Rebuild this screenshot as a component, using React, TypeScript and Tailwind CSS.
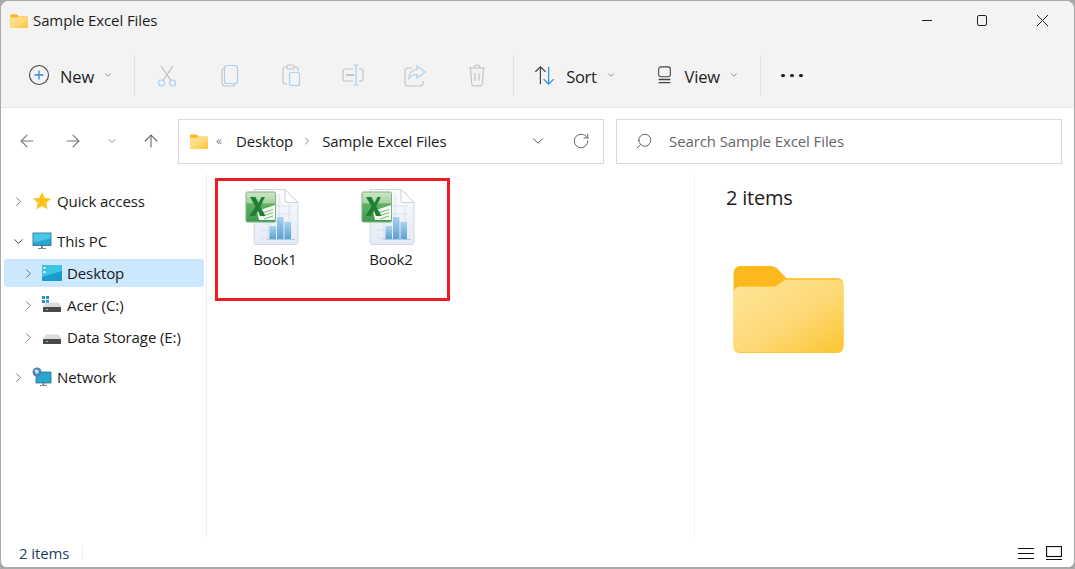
import { ChevronDown, ChevronRight, RotateCw, Search, ArrowLeft, ArrowRight, ArrowUp } from "lucide-react";

const FONT = "font-['Open_Sans','Noto_Sans',sans-serif]";

function FolderIcon({ className, id }: { className: string; id: string }) {
  return (
    <svg viewBox="0 0 110 88" className={className}>
      <defs>
        <linearGradient id={id} x1="0" y1="0" x2="1" y2="1">
          <stop offset="0" stopColor="#ffe59b" />
          <stop offset="0.55" stopColor="#fdd976" />
          <stop offset="1" stopColor="#fcc530" />
        </linearGradient>
      </defs>
      <path d="M0 8a7 7 0 0 1 7-7h28c5 0 8 1 11 5l7 7v14H0z" fill="#fdb81c" />
      <path d="M0 82V27a6 6 0 0 1 6-6h32c4 0 6-1 8-3l6-5h52a6 6 0 0 1 6 6v63a6 6 0 0 1-6 6H6a6 6 0 0 1-6-6z" fill="#fcc63d" />
      <path d="M0 81V28a6 6 0 0 1 6-6h32c4 0 6-1 8-3l6-4h52a6 6 0 0 1 6 6v60a6 6 0 0 1-6 6H6a6 6 0 0 1-6-6z" fill={`url(#${id})`} />
    </svg>
  );
}

function ExcelIcon({ id }: { id: string }) {
  return (
    <svg viewBox="0 0 54 58" className="mr-[6px] h-[58px] w-[54px]">
      <defs>
        <linearGradient id={id + "p"} x1="0" y1="0" x2="0" y2="1">
          <stop offset="0" stopColor="#f9fbfe" />
          <stop offset="1" stopColor="#e3ebf6" />
        </linearGradient>
        <linearGradient id={id + "g"} x1="0" y1="0" x2="0" y2="1">
          <stop offset="0" stopColor="#cfe6c9" />
          <stop offset="0.35" stopColor="#a8d3a2" />
          <stop offset="0.4" stopColor="#62b063" />
          <stop offset="1" stopColor="#3c9a4a" />
        </linearGradient>
        <linearGradient id={id + "b"} x1="0" y1="0" x2="0" y2="1">
          <stop offset="0" stopColor="#a6d4f0" />
          <stop offset="1" stopColor="#5f9fcf" />
        </linearGradient>
      </defs>
      <path d="M9 1.500h31l13 13v40a2 2 0 0 1-2 2H11a2 2 0 0 1-2-2z" fill={`url(#${id}p)`} stroke="#d2d7de" />
      <path d="M40 1.500v11a2 2 0 0 0 2 2h11z" fill="#fff" stroke="#cdd2d9" />
      <g stroke="#d8dde3" strokeWidth="0.8" fill="none">
        <path d="M15 18h32M15 26h32M15 34h32M15 42h32M15 50h18M23 34v18M34 6v46M44 16v26" />
      </g>
      <rect x="24.500" y="38" width="6.500" height="13" fill={`url(#${id}b)`} />
      <rect x="32" y="29" width="6.500" height="22" fill={`url(#${id}b)`} />
      <rect x="39.500" y="34" width="6.500" height="17" fill={`url(#${id}b)`} />
      <path d="M22 51.500h28" stroke="#a8cfea" />
      <rect x="1" y="4" width="29.500" height="30" rx="1.500" fill={`url(#${id}g)`} stroke="#7fb285" />
      <path d="M12 23l18-6v15H14z" fill="#f4f9f2" />
      <path d="M17 25l11-3.500M18 28l10-3.500M19 31l9-3" stroke="#7ab97d" strokeWidth="1" />
      <path d="M5 9h5.500l3 6 3-6H20l-4.800 9.500L20.500 28H15l-2-5-3 5H4.500l6-9.500z" fill="#217e35" />
    </svg>
  );
}

function ToolIcon({ children }: { children: React.ReactNode }) {
  return (
    <svg viewBox="0 0 24 24" className="h-6 w-6" fill="none" strokeWidth="1.2">
      {children}
    </svg>
  );
}

function Divider() {
  return <div className="h-[41px] w-px bg-[#e2e2e2]" />;
}

function Caret({ className }: { className: string }) {
  return <ChevronDown size={10} strokeWidth={1.5} className={`text-[#555] ${className}`} />;
}

function NavRow({
  indent,
  open,
  label,
  icon,
  selected,
  mt,
}: {
  indent?: boolean;
  open?: boolean;
  label: string;
  icon: React.ReactNode;
  selected?: boolean;
  mt?: string;
}) {
  return (
    <div
      className={`ml-[3px] flex h-[28px] w-[200px] items-center rounded-[3px] ${mt ?? "mt-1"} ${selected ? "bg-[#cce8ff]" : ""} ${indent ? "pl-[17px]" : "pl-[7px]"}`}
    >
      {open ? (
        <ChevronDown size={15} strokeWidth={1.4} className="text-[#222]" />
      ) : (
        <ChevronRight size={15} strokeWidth={1.4} className="text-[#666]" />
      )}
      <span className="ml-[6px] flex w-[20px] justify-center">{icon}</span>
      <span className="ml-[5px] text-[15px] tracking-[-0.1px] text-[#1a1a1a]">{label}</span>
    </div>
  );
}

function Drive({ windows }: { windows?: boolean }) {
  return (
    <svg viewBox="0 0 20 18" className="h-[18px] w-[20px]">
      {windows && (
        <g fill="#2f8fd0">
          <rect x="0" y="0" width="3" height="3" />
          <rect x="4" y="0" width="3" height="3" />
          <rect x="0" y="4" width="3" height="3" />
          <rect x="4" y="4" width="3" height="3" />
        </g>
      )}
      <path d="M2 9l2-2.500h12L19 9v3H1z" fill="#dcdcdc" />
      <rect x="1" y="11" width="18" height="5" rx="0.500" fill="#4a4a4a" />
      <rect x="4" y="13" width="2" height="1" fill="#5fe06a" />
    </svg>
  );
}

function Monitor() {
  return (
    <svg viewBox="0 0 20 18" className="h-[18px] w-[20px]">
      <rect x="1" y="1" width="18" height="12.500" fill="#2aa7cf" stroke="#27657f" strokeWidth="0.8" />
      <path d="M1.500 1.500h17v5l-17 4z" fill="#49c7e4" />
      <path d="M9 14h2v2H9zM6 16h8v1H6z" fill="#7f8a90" />
    </svg>
  );
}

export default function App() {
  return (
    <div className={`h-[569px] w-[1075px] overflow-hidden bg-[#a9a9a9] pb-[2px] pl-px pt-px ${FONT}`}>
      <div className="relative flex h-full w-[1073px] flex-col overflow-hidden rounded-t-[8px] rounded-b-[6px] bg-white">
        {/* Title bar */}
        <div className="flex h-[39px] items-center bg-[#f3f3f3]">
          <FolderIcon id="ft" className="ml-[9px] h-[14px] w-[18px]" />
          <span className="ml-[5px] text-[15px] tracking-[-0.1px] text-[#1c1c1c]">Sample Excel Files</span>
          <div className="ml-auto flex items-center">
            <div className="mr-[45px] h-px w-[10px] bg-[#222]" />
            <div className="mr-[50px] h-[11px] w-[10px] rounded-[2px] border border-[#222]" />
            <svg viewBox="0 0 10 10" className="mr-[26px] h-[11px] w-[11px]">
              <path d="M0 0l10 10M10 0L0 10" stroke="#222" strokeWidth="0.9" />
            </svg>
          </div>
        </div>

        {/* Command bar */}
        <div className="flex h-[68px] items-center border-b border-[#e5e5e5] bg-[#f3f3f3] pt-[3px]">
          <svg viewBox="0 0 22 22" className="ml-[27px] h-[22px] w-[22px]">
            <circle cx="11" cy="11" r="9.500" fill="none" stroke="#444" strokeWidth="1.100" />
            <path d="M11 6.500v9M6.500 11h9" stroke="#2a8ce0" strokeWidth="1.300" />
          </svg>
          <span className="ml-[10px] mt-[4px] text-[16.5px] tracking-[-0.1px] text-[#222]">New</span>
          <Caret className="ml-[9px] mr-[21px]" />
          <Divider />
          <div className="ml-[20px] flex items-center gap-[38px]">
            <ToolIcon>
              <circle cx="6.500" cy="20" r="3" stroke="#a9d0ef" />
              <circle cx="17.500" cy="20" r="3" stroke="#a9d0ef" />
              <path d="M8 17.500L18 3M16 17.500L6 3" stroke="#bdbdbd" />
            </ToolIcon>
            <ToolIcon>
              <rect x="5" y="5" width="13" height="18" rx="3" stroke="#c4c4c4" />
              <rect x="7.500" y="2.500" width="13" height="18" rx="2.500" fill="#f3f3f3" stroke="#a9d0ef" />
            </ToolIcon>
            <ToolIcon>
              <path d="M8 21H6a2 2 0 0 1-2-2V6a2 2 0 0 1 2-2h11a2 2 0 0 1 2 2v2" stroke="#c4c4c4" />
              <rect x="8" y="2" width="7" height="4" rx="1.500" fill="#f3f3f3" stroke="#c4c4c4" />
              <rect x="10.500" y="9.500" width="10" height="13" rx="2" stroke="#a9d0ef" />
            </ToolIcon>
            <ToolIcon>
              <path d="M12 6H4a2 2 0 0 0-2 2v8a2 2 0 0 0 2 2h8M18 6h2a2 2 0 0 1 2 2v8a2 2 0 0 1-2 2h-2" stroke="#c4c4c4" />
              <path d="M5 12h8" stroke="#c4c4c4" strokeWidth="2" />
              <path d="M15 2v20M12.500 2h5M12.500 22h5" stroke="#a9d0ef" />
            </ToolIcon>
            <ToolIcon>
              <path d="M9 5H5a3 3 0 0 0-3 3v12a3 3 0 0 0 3 3h12a3 3 0 0 0 3-3v-2" stroke="#c4c4c4" />
              <path d="M14 3l8 6-8 6v-3.500c-4 0-6 1-8 4 0-5 3-8.500 8-9z" stroke="#a9d0ef" />
            </ToolIcon>
            <ToolIcon>
              <path d="M3.500 5h17M9 5a3 3 0 0 1 6 0M5.500 5l1.200 16a2 2 0 0 0 2 1.800h6.600a2 2 0 0 0 2-1.800L18.500 5M10 10v8M14 10v8" stroke="#c4c4c4" />
            </ToolIcon>
          </div>
          <div className="ml-[24px]">
            <Divider />
          </div>
          <svg viewBox="0 0 24 24" className="ml-[20px] h-[22px] w-[22px]" fill="none" strokeWidth="1.300">
            <path d="M7 22V3M1.500 8.500L7 3l5.500 5.500" stroke="#444" />
            <path d="M16 3v19M10.500 16.500L16 22l5.500-5.500" stroke="#2a8ce0" />
          </svg>
          <span className="ml-[10px] mt-[4px] text-[16.5px] tracking-[-0.3px] text-[#222]">Sort</span>
          <Caret className="ml-[9px]" />
          <svg viewBox="0 0 16 20" className="ml-[41px] h-[18px] w-[15px]" fill="none" stroke="#444" strokeWidth="1.200">
            <rect x="1.500" y="1" width="13" height="11" rx="2.500" />
            <path d="M1.500 15h13M1.500 18.500h13" strokeWidth="1.500" />
          </svg>
          <span className="ml-[13px] mt-[4px] text-[16.5px] tracking-[-0.2px] text-[#222]">View</span>
          <Caret className="ml-[9px] mr-[21px]" />
          <Divider />
          <div className="ml-[20px] flex gap-[5px]">
            <div className="h-[3px] w-[4px] rounded-full bg-[#222]" />
            <div className="h-[3px] w-[4px] rounded-full bg-[#222]" />
            <div className="h-[3px] w-[4px] rounded-full bg-[#222]" />
          </div>
        </div>

        {/* Address row */}
        <div className="flex h-[66px] items-center">
          <ArrowLeft size={20} strokeWidth={1.3} className="ml-[16px] text-[#777]" />
          <ArrowRight size={20} strokeWidth={1.3} className="ml-[26px] text-[#777]" />
          <ChevronDown size={12} strokeWidth={1.5} className="ml-[23px] text-[#666]" />
          <ArrowUp size={20} strokeWidth={1.3} className="ml-[23px] text-[#666]" />
          <div className="ml-[17px] flex h-[45px] w-[426px] items-center border border-[#d9d9d9]">
            <FolderIcon id="fa" className="ml-[11px] h-[15px] w-[18px]" />
            <span className="ml-[8px] text-[12px] text-[#888]">«</span>
            <span className="ml-[14px] text-[15px] tracking-[-0.1px] text-[#1c1c1c]">Desktop</span>
            <ChevronRight size={12} strokeWidth={1.6} className="ml-[8px] text-[#666]" />
            <span className="ml-[9px] text-[15px] tracking-[-0.1px] text-[#1c1c1c]">Sample Excel Files</span>
            <ChevronDown size={18} strokeWidth={1.3} className="ml-auto text-[#555]" />
            <RotateCw size={18} strokeWidth={1.2} className="ml-[25px] mr-[13px] text-[#555]" />
          </div>
          <div className="ml-[12px] flex h-[45px] w-[446px] items-center border border-[#d9d9d9]">
            <Search size={18} strokeWidth={1.2} className="ml-[18px] -scale-x-100 text-[#555]" />
            <span className="ml-[16px] text-[15px] tracking-[-0.1px] text-[#666]">Search Sample Excel Files</span>
          </div>
        </div>

        {/* Body */}
        <div className="flex flex-1">
          <div className="w-[206px] border-r border-[#eeeeee] pt-[13px]">
            <NavRow
              mt="mt-0"
              label="Quick access"
              icon={
                <svg viewBox="0 0 20 20" className="h-[20px] w-[20px]">
                  <path d="M10 1l2.700 6 6.300.6-4.800 4.300 1.500 6.400L10 15l-5.700 3.300 1.500-6.400L1 7.600 7.300 7z" fill="#fcc419" />
                </svg>
              }
            />
            <NavRow mt="mt-3" open label="This PC" icon={<Monitor />} />
            <NavRow
              selected
              indent
              label="Desktop"
              icon={
                <svg viewBox="0 0 20 16" className="h-[16px] w-[20px]">
                  <rect x="0" y="0" width="20" height="16" rx="1" fill="#1b9ad0" />
                  <path d="M0 1a1 1 0 0 1 1-1h19v6L0 12z" fill="#3dc3e4" />
                  <rect x="1.500" y="2" width="2" height="2" fill="#fff" />
                  <rect x="1.500" y="6" width="2" height="2" fill="#fff" />
                </svg>
              }
            />
            <NavRow indent label="Acer (C:)" icon={<Drive windows />} />
            <NavRow indent label="Data Storage (E:)" icon={<Drive />} />
            <NavRow
              mt="mt-3"
              label="Network"
              icon={
                <svg viewBox="0 0 20 20" className="h-[20px] w-[20px]">
                  <rect x="4" y="5" width="15" height="11" fill="#2aa7cf" stroke="#27657f" strokeWidth="0.7" />
                  <path d="M10.500 16h2v2h-2zM8 18h7v1H8z" fill="#7f8a90" />
                  <circle cx="5" cy="5" r="4.500" fill="#4d83b8" />
                  <path d="M2.500 3c2-1 3-.5 4 .5S6 7 4 7z" fill="#cfe3f2" />
                </svg>
              }
            />
          </div>

          {/* File area */}
          <div className="relative w-[488px] border-r border-[#f2f2f2] pt-[14px]">
            <div className="flex">
              <div className="ml-[33px] flex w-[70px] flex-col items-center">
                <ExcelIcon id="b1" />
                <span className="mt-[2px] text-[15px] tracking-[-0.1px] text-[#1c1c1c]">Book1</span>
              </div>
              <div className="ml-[46px] flex w-[70px] flex-col items-center">
                <ExcelIcon id="b2" />
                <span className="mt-[2px] text-[15px] tracking-[-0.1px] text-[#1c1c1c]">Book2</span>
              </div>
            </div>
            {/* red annotation */}
            <div className="absolute left-[8px] top-[4px] h-[123px] w-[235px] border-[3px] border-[#ed1c24]" />
          </div>

          {/* Details pane */}
          <div className="flex-1 pl-[31px] pt-[9px]">
            <div className="text-[20px] tracking-[-0.2px] text-[#1c1c1c]">2 items</div>
            <FolderIcon id="fd" className="ml-[7px] mt-[52px] h-[88px] w-[111px]" />
          </div>
        </div>

        {/* Status bar */}
        <div className="flex h-[30px] items-center bg-white pt-[2px]">
          <span className="ml-[18px] text-[15px] tracking-[-0.1px] text-[#1f3f6a]">2 items</span>
          <div className="ml-[13px] h-[15px] w-px bg-[#eeeeee]" />
          <div className="ml-auto flex items-center">
            <svg viewBox="0 0 16 13" className="h-[13px] w-[16px]" fill="none" stroke="#111" strokeWidth="1.200">
              <path d="M0 1.500h16M0 6.500h16M0 11.500h16" />
            </svg>
            <svg viewBox="0 0 16 14" className="ml-[12px] mr-[12px] h-[14px] w-[16px]" fill="none" stroke="#111" strokeWidth="1.200">
              <rect x="0.500" y="0.500" width="15" height="10" />
              <path d="M0 13.500h16" />
            </svg>
          </div>
        </div>
      </div>
    </div>
  );
}
